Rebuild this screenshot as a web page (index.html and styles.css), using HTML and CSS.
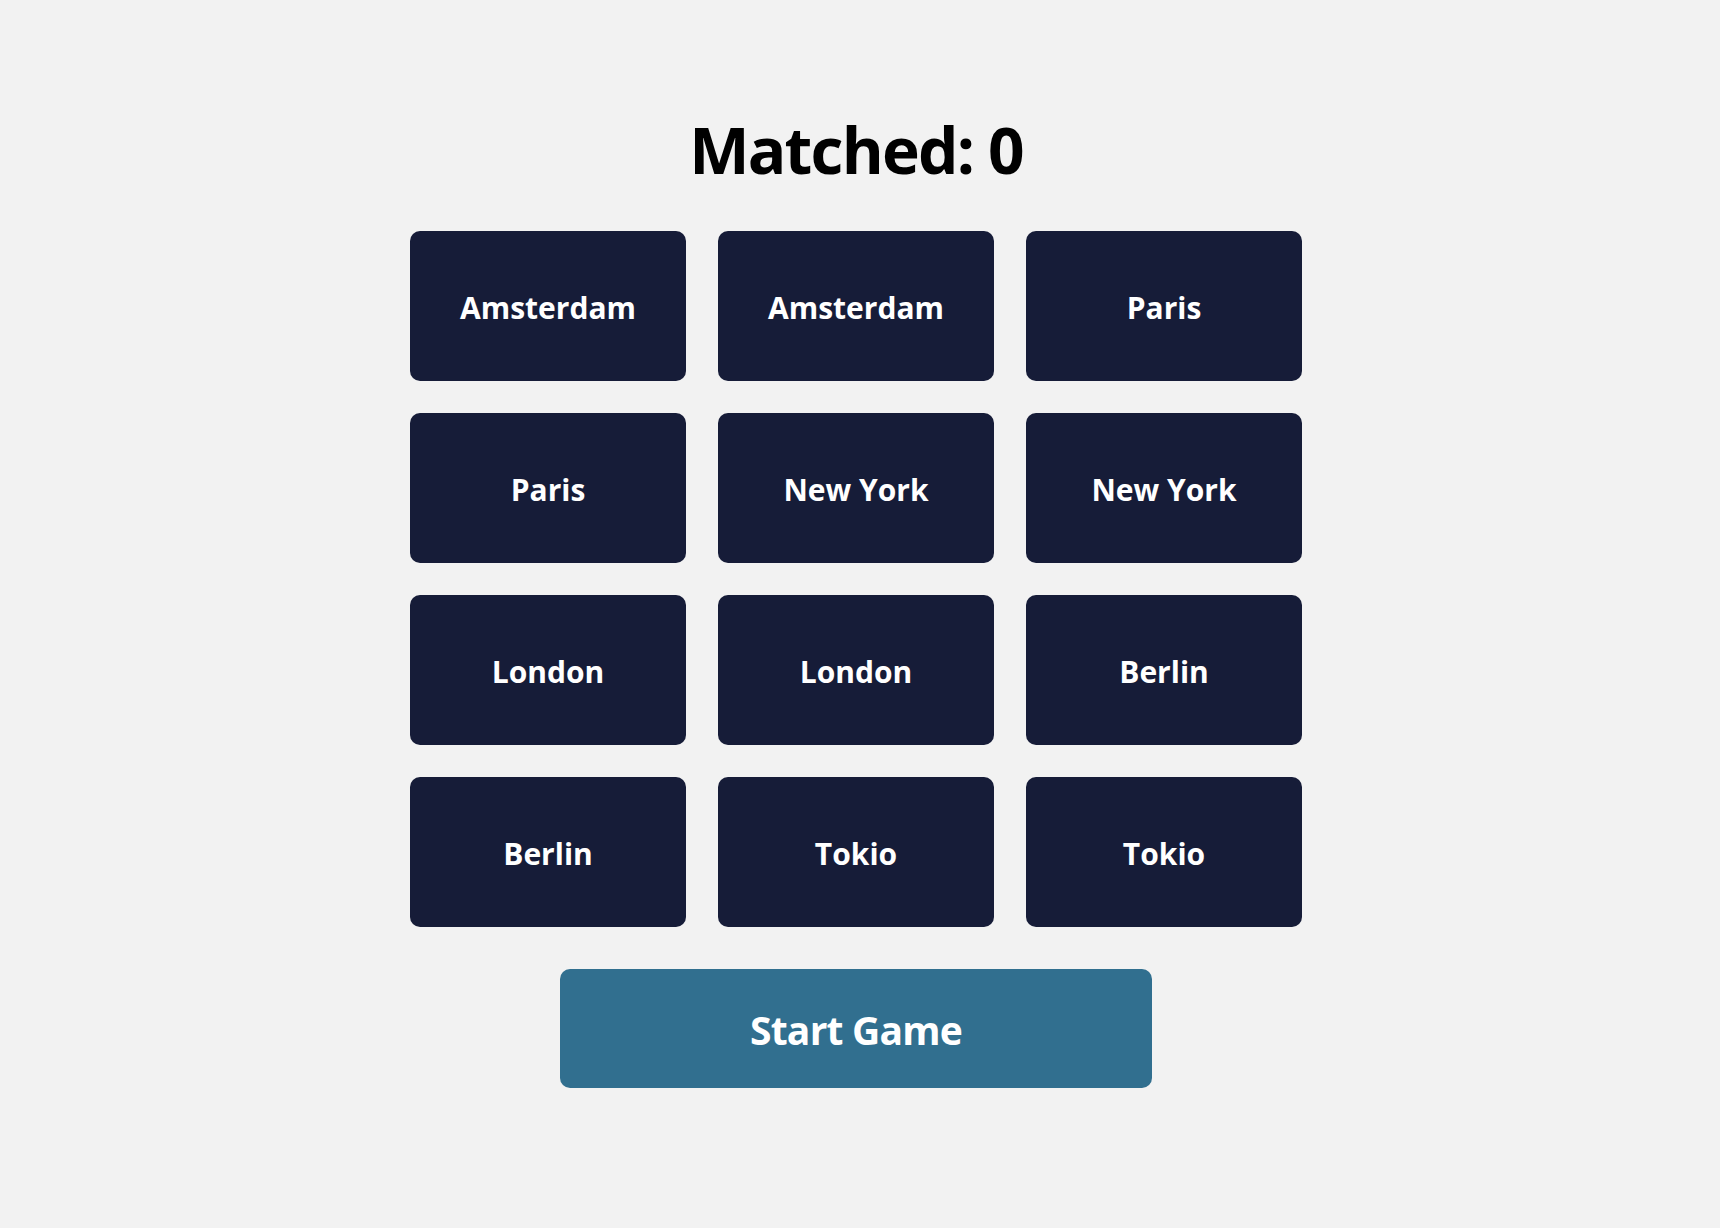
FILE: index.html
```html
<!DOCTYPE html>
<html lang="en">
<head>
<meta charset="utf-8">
<title>Memory Game</title>
<link rel="stylesheet" href="styles.css">
</head>
<body>
<main class="game">
  <h1 class="score">Matched: 0</h1>
  <div class="board">
    <div class="card">Amsterdam</div>
    <div class="card">Amsterdam</div>
    <div class="card">Paris</div>
    <div class="card">Paris</div>
    <div class="card">New York</div>
    <div class="card">New York</div>
    <div class="card">London</div>
    <div class="card">London</div>
    <div class="card">Berlin</div>
    <div class="card">Berlin</div>
    <div class="card">Tokio</div>
    <div class="card">Tokio</div>
  </div>
  <button class="start">Start Game</button>
</main>
</body>
</html>
```
FILE: styles.css
```css
html, body {
  margin: 0;
  padding: 0;
  background: #f2f2f2;
  font-family: "Open Sans", "Noto Sans", sans-serif;
}
.game {
  display: flex;
  flex-direction: column;
  align-items: center;
  padding-top: 117px;
  padding-right: 8px;
}
.score {
  margin: 0 0 49px;
  font-size: 64px;
  line-height: 65px;
  font-weight: 700;
  letter-spacing: -1.8px;
  color: #000;
}
.board {
  display: grid;
  grid-template-columns: repeat(3, 276px);
  grid-auto-rows: 150px;
  gap: 32px;
}
.card {
  background: #161c38;
  color: #fff;
  border-radius: 10px;
  display: flex;
  align-items: center;
  justify-content: center;
  font-size: 30px;
  font-weight: 700;
  padding-top: 2px;
}
.start {
  margin-top: 42px;
  width: 592px;
  height: 119px;
  border: 0;
  border-radius: 10px;
  background: #316f8f;
  color: #fff;
  font-family: inherit;
  font-size: 39px;
  font-weight: 700;
  letter-spacing: -0.8px;
  padding-top: 3px;
}
```
